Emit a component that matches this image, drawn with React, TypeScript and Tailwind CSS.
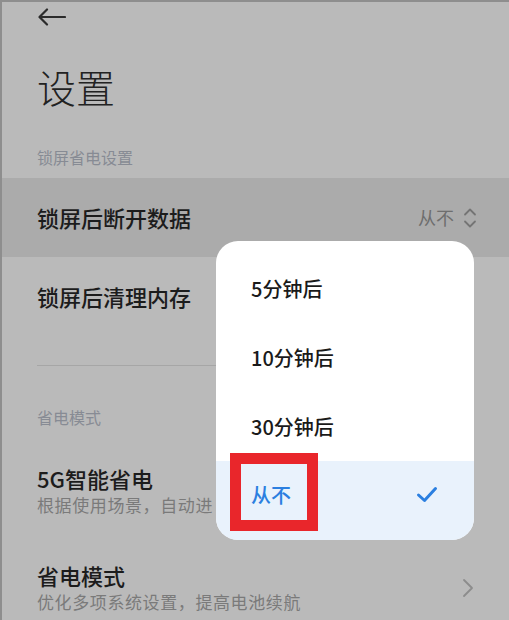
import React from "react";

const font = { fontFamily: '"Noto Sans CJK SC", "Noto Sans", sans-serif' };

const options = ["5分钟后", "10分钟后", "30分钟后"];

const BackArrow = () => (
  <svg width="28" height="18" viewBox="0 0 28 18" fill="none">
    <path
      d="M27 9H2M9 1.5L1.5 9L9 16.5"
      stroke="#2b2b2b"
      strokeWidth="2.2"
      strokeLinecap="round"
      strokeLinejoin="round"
    />
  </svg>
);

const UpDown = () => (
  <svg width="14" height="22" viewBox="0 0 14 22" fill="none">
    <path
      d="M2 7.5L7 2.5L12 7.5M2 14.5L7 19.5L12 14.5"
      stroke="#747474"
      strokeWidth="1.8"
      strokeLinecap="round"
      strokeLinejoin="round"
    />
  </svg>
);

const ChevronRight = () => (
  <svg width="12" height="20" viewBox="0 0 12 20" fill="none">
    <path
      d="M2 2L10 10L2 18"
      stroke="#8c8c8c"
      strokeWidth="1.8"
      strokeLinecap="round"
      strokeLinejoin="round"
    />
  </svg>
);

const Check = () => (
  <svg width="22" height="17" viewBox="0 0 22 17" fill="none">
    <path
      d="M2.5 9L8.5 14.5L19.5 2.5"
      stroke="#2b7fe0"
      strokeWidth="3"
      strokeLinecap="round"
      strokeLinejoin="round"
    />
  </svg>
);

export default function App() {
  return (
    <div
      style={font}
      className="relative w-[509px] h-[620px] overflow-hidden bg-[#bababa] border-l-2 border-t-2 border-[#8e8e8e]"
    >
      <div className="flex flex-col">
        <div className="h-[30px] flex items-center pl-[36px]">
          <BackArrow />
        </div>

        <h1 className="mt-[30px] h-[48px] leading-[48px] pl-[35px] text-[39px] font-light text-[#222]">
          设置
        </h1>

        <div className="mt-[35px] h-[24px] leading-[24px] pl-[35px] text-[16px] text-[#878b94]">
          锁屏省电设置
        </div>

        <div className="mt-[9px] h-[79px] bg-[#ababab] flex items-center justify-between pl-[35px] pr-[32px]">
          <span className="text-[22px] font-medium text-[#1c1c1c]">锁屏后断开数据</span>
          <div className="flex items-center gap-[9px]">
            <span className="text-[18px] text-[#6e6e6e]">从不</span>
            <UpDown />
          </div>
        </div>

        <div className="h-[78px] flex items-center pl-[35px]">
          <span className="text-[22px] font-medium text-[#1c1c1c]">锁屏后清理内存</span>
        </div>

        <div className="mt-[30px] mx-[35px] h-px bg-[#a6a6a6]" />

        <div className="mt-[39px] h-[24px] leading-[24px] pl-[35px] text-[16px] text-[#878b94]">
          省电模式
        </div>

        <div className="mt-[35px] pl-[35px] flex flex-col">
          <span className="h-[28px] leading-[28px] text-[22px] font-medium text-[#1c1c1c]">
            5G智能省电
          </span>
          <span className="mt-px h-[24px] leading-[24px] text-[17px] tracking-[0.6px] text-[#7a7a7a]">
            根据使用场景，自动进
          </span>
        </div>

        <div className="mt-[44px] pl-[35px] pr-[35px] flex items-center justify-between">
          <div className="flex flex-col">
            <span className="h-[28px] leading-[28px] text-[22px] font-medium text-[#1c1c1c]">
              省电模式
            </span>
            <span className="mt-px h-[24px] leading-[24px] text-[17px] tracking-[0.6px] text-[#7a7a7a]">
              优化多项系统设置，提高电池续航
            </span>
          </div>
          <ChevronRight />
        </div>
      </div>

      <div className="absolute left-[214px] top-[239px] w-[258px] h-[299px] rounded-[22px] bg-white overflow-hidden flex flex-col pt-[13px]">
        {options.map((o) => (
          <div
            key={o}
            className="h-[69px] flex items-center pl-[35px] text-[20px] font-medium text-[#1a1a1a]"
          >
            {o}
          </div>
        ))}
        <div className="flex-1 bg-[#e9f2fc] flex items-center justify-between pl-[35px] pr-[36px] pb-[12px]">
          <span className="text-[20px] font-medium text-[#2b7fe0]">从不</span>
          <Check />
        </div>
      </div>

      <div className="absolute left-[228px] top-[451px] w-[88px] h-[78px] border-[11px] border-[#e9262b]" />
    </div>
  );
}
